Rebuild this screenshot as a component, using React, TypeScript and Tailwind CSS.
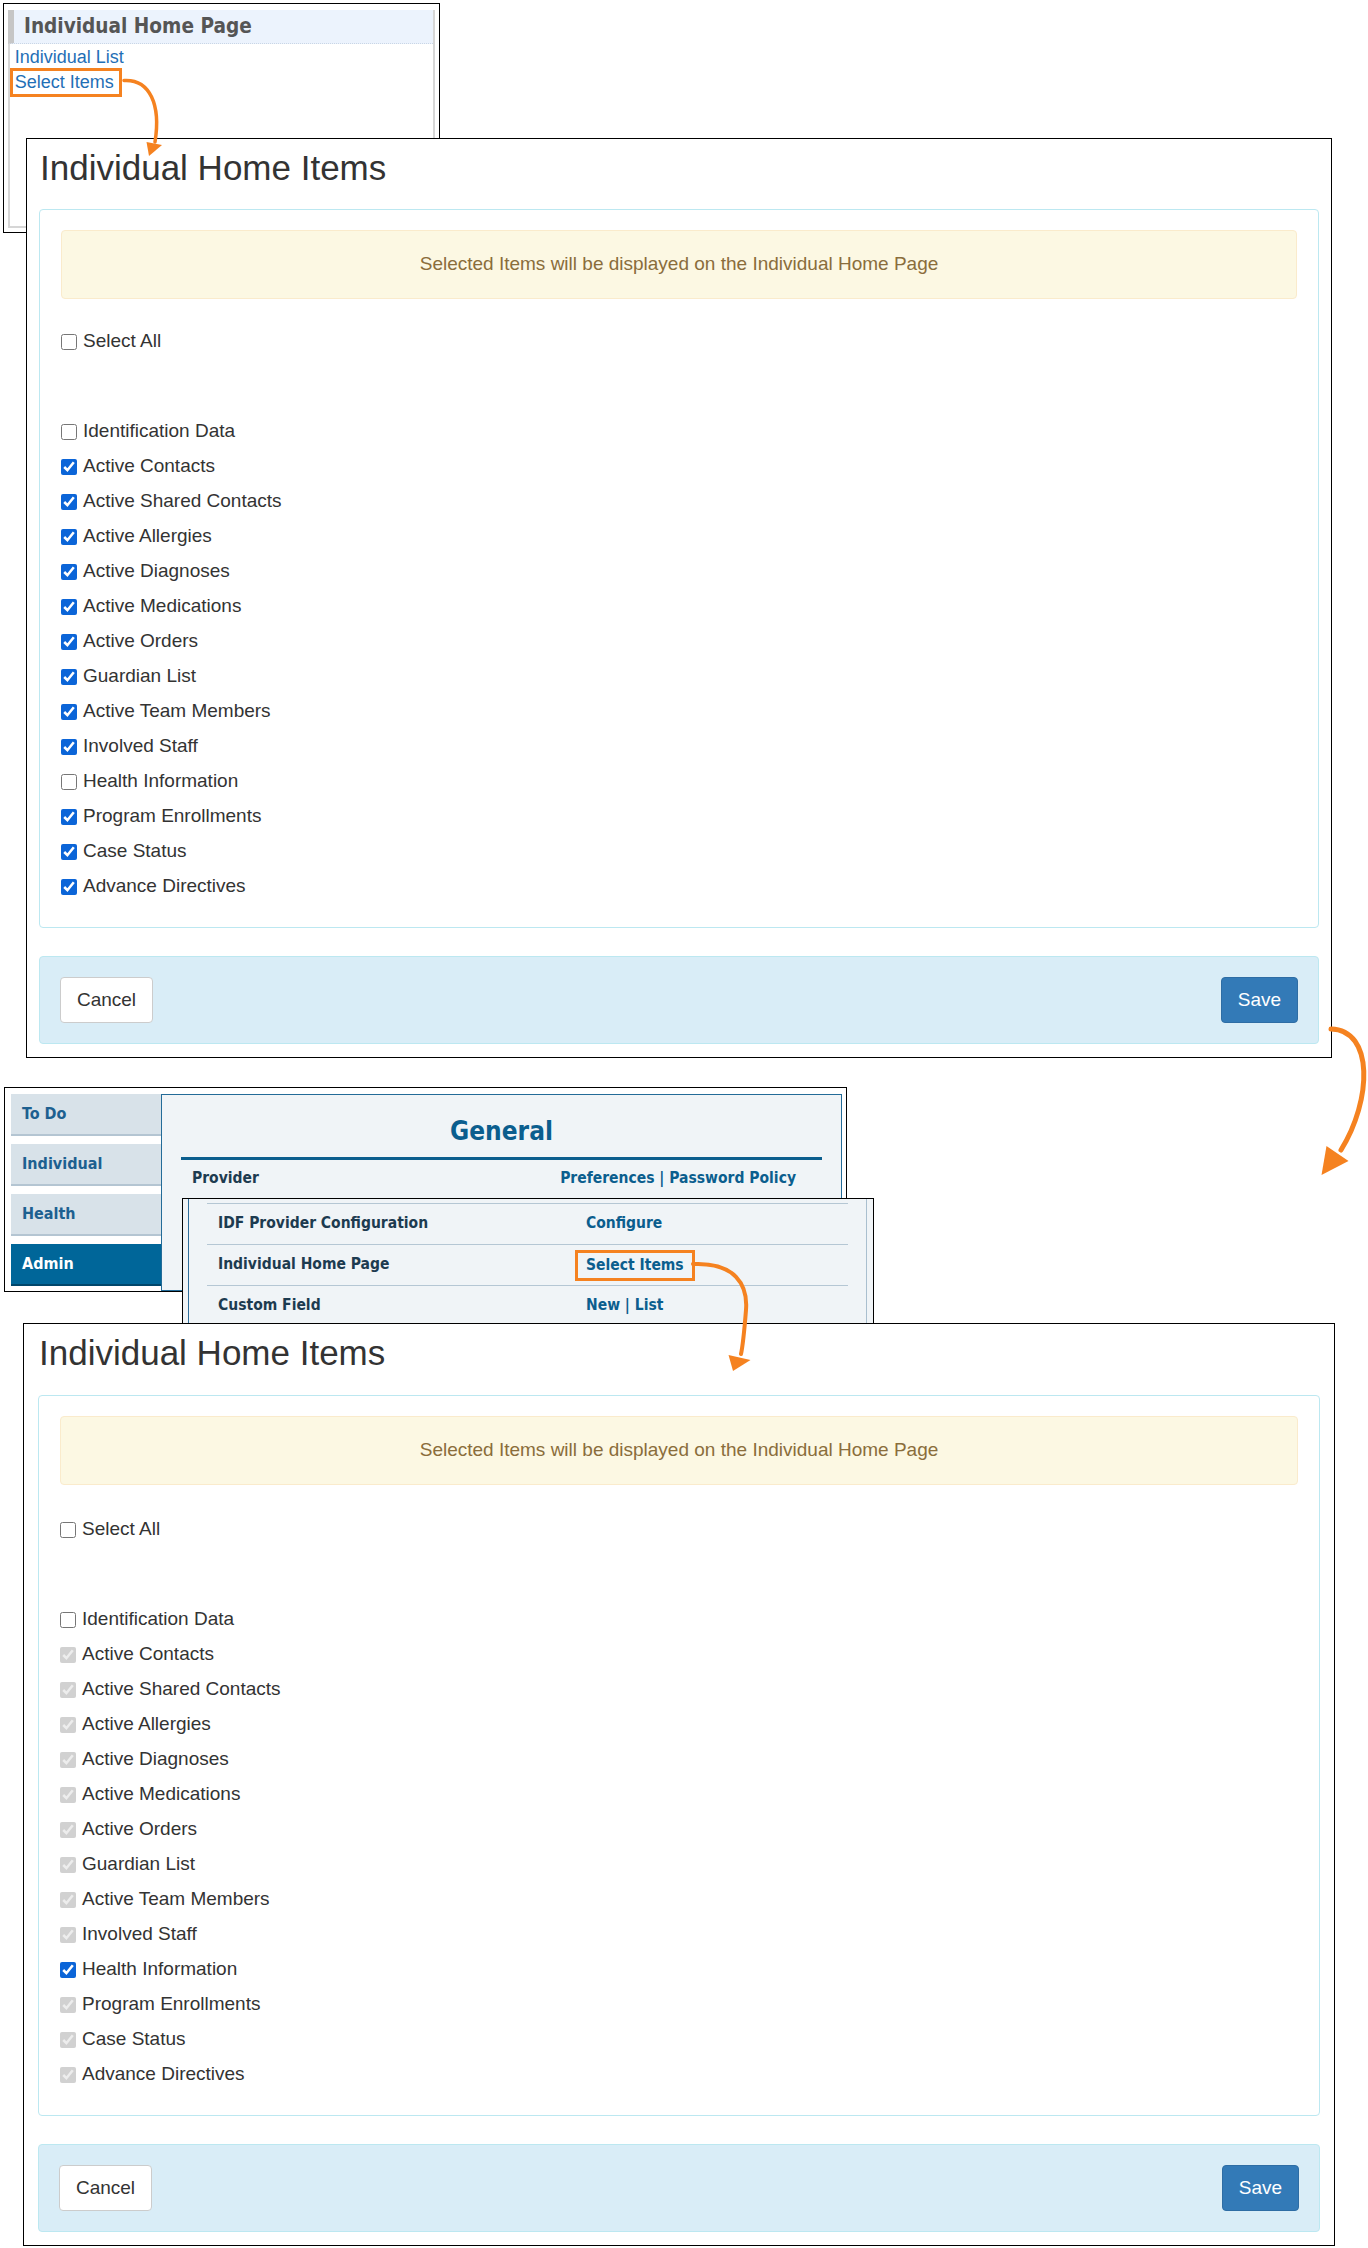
import React from 'react';

const sans = "[font-family:'Liberation_Sans',Arial,sans-serif]";
const tahoma = "[font-family:'DejaVu_Sans_Condensed','DejaVu_Sans',sans-serif] [font-stretch:condensed] font-bold";

const items = [
  'Identification Data',
  'Active Contacts',
  'Active Shared Contacts',
  'Active Allergies',
  'Active Diagnoses',
  'Active Medications',
  'Active Orders',
  'Guardian List',
  'Active Team Members',
  'Involved Staff',
  'Health Information',
  'Program Enrollments',
  'Case Status',
  'Advance Directives',
];

type ItemState = { checked: boolean; disabled: boolean };

function firstState(name: string): ItemState {
  const off = name === 'Identification Data' || name === 'Health Information';
  return { checked: !off, disabled: false };
}

function secondState(name: string): ItemState {
  if (name === 'Identification Data') return { checked: false, disabled: false };
  if (name === 'Health Information') return { checked: true, disabled: false };
  return { checked: true, disabled: true };
}

function CheckRow({ label, checked, disabled }: { label: string; checked: boolean; disabled: boolean }) {
  return (
    <label className="flex h-[35px] items-center">
      <input
        type="checkbox"
        defaultChecked={checked}
        disabled={disabled}
        className="m-0 h-[16px] w-[16px] accent-[#0b65d8]"
      />
      <span className="ml-[6px] text-[19px] text-[#333]">{label}</span>
    </label>
  );
}

function ItemsPanel({ second, className }: { second?: boolean; className: string }) {
  const stateOf = second ? secondState : firstState;
  return (
    <div className={`border border-black bg-white pt-[9px] ${sans} ${className}`}>
      <h1 className="h-[40px] pl-[1px] text-[35px] leading-[40px] text-[#333]">Individual Home Items</h1>
      <div className={`${second ? 'mt-[22px]' : 'mt-[21px]'} rounded-[4px] border border-[#bce8f1] px-[21px] pt-[20px] pb-[23px]`}>
        <div className="flex h-[69px] items-center justify-center rounded-[4px] border border-[#faebcc] bg-[#fcf8e3] text-[19px] text-[#8a6d3b]">
          Selected Items will be displayed on the Individual Home Page
        </div>
        <div className={second ? 'mt-[27px]' : 'mt-[25px]'}>
          <CheckRow label="Select All" checked={false} disabled={false} />
        </div>
        <div className="mt-[55px]">
          {items.map((name) => {
            const s = stateOf(name);
            return <CheckRow key={name} label={name} checked={s.checked} disabled={s.disabled} />;
          })}
        </div>
      </div>
      <div className="mt-[28px] mb-[13px] flex h-[88px] items-center justify-between rounded-[4px] border border-[#bce8f1] bg-[#d9edf7] px-[20px]">
        <button className="h-[46px] w-[93px] rounded-[4px] border border-[#ccc] bg-white text-[19px] text-[#333]">Cancel</button>
        <button className="h-[46px] w-[77px] rounded-[4px] border border-[#2e6da4] bg-[#337ab7] text-[19px] text-white">Save</button>
      </div>
    </div>
  );
}

function TopBox() {
  return (
    <div className="ml-[3px] h-[230px] w-[437px] border border-black bg-white px-[4px] pt-[6px] pb-[4px]">
      <div className="h-full border-2 border-t-0 border-[#d6d6d6]">
        <div className={`-ml-[2px] flex h-[34px] items-center border-b border-l-[6px] border-dotted border-b-[#c9d6e6] border-l-[#c6c6c6] [border-left-style:solid] bg-[#ecf3fd] pl-[10px] text-[20.6px] text-[#555] ${tahoma}`}>
          Individual Home Page
        </div>
        <div className={`flex flex-col items-start pt-[2px] text-[18px] leading-[23px] text-[#1f6fb6] ${sans}`}>
          <span className="pl-[4.7px]">Individual List</span>
          <span className="-mt-[1px] border-[3px] border-[#f58220] pl-[1.7px] pr-[5px]">Select Items</span>
        </div>
      </div>
    </div>
  );
}

const tabs = ['To Do', 'Individual', 'Health', 'Admin'];

function AdminBox() {
  return (
    <div className={`mt-[29px] ml-[4px] flex h-[205px] w-[843px] border border-black bg-white pt-[6px] pl-[6px] ${tahoma}`}>
      <div className="w-[150px]">
        {tabs.map((t) => (
          <div
            key={t}
            className={
              t === 'Admin'
                ? 'mb-[8px] flex h-[42px] items-center border-b-2 border-[#00466b] bg-[#006699] pl-[11px] text-[16px] text-white'
                : 'mb-[8px] flex h-[42px] items-center border-b-2 border-[#b4c5d2] bg-[#d8e2e9] pl-[11px] text-[16px] text-[#1d6090]'
            }
          >
            {t}
          </div>
        ))}
      </div>
      <div className="w-[681px] border border-[#236b98] bg-[#f0f4f7]">
        <div className="pt-[20px] text-center text-[26px] leading-[32px] text-[#0b5e8e]">General</div>
        <div className="mx-[19px] mt-[10px] h-[3px] bg-[#0b5e8e]" />
        <div className="mx-[19px] flex h-[38px] items-center justify-between pl-[11px] pr-[26px] text-[15.5px]">
          <span className="text-[#1d3b50]">Provider</span>
          <span className="text-[#0b5e8e]">Preferences | Password Policy</span>
        </div>
      </div>
    </div>
  );
}

function SubRow({ label, children }: { label: string; children: React.ReactNode }) {
  return (
    <div className="grid h-[41px] grid-cols-[368px_1fr] items-center border-t border-[#b5c7d4] pl-[11px]">
      <span className="text-[#1d3b50]">{label}</span>
      <span className="text-[#0b5e8e]">{children}</span>
    </div>
  );
}

function SubBox() {
  return (
    <div className={`relative z-[5] -mt-[94px] ml-[182px] h-[140px] w-[692px] border border-black bg-[#f0f4f7] text-[15.5px] ${tahoma}`}>
      <div className="mr-[6px] ml-[5px] h-full border-r border-l border-r-[#a9bfcf] border-l-[#2f6f9c] pt-[4px]">
        <div className="mx-[18px]">
          <SubRow label="IDF Provider Configuration">Configure</SubRow>
          <SubRow label="Individual Home Page">
            <span className="-ml-[11px] inline-block border-[3px] border-[#f58220] px-[8px] leading-[25px]">Select Items</span>
          </SubRow>
          <SubRow label="Custom Field">New | List</SubRow>
        </div>
      </div>
    </div>
  );
}

function Arrows() {
  return (
    <svg className="pointer-events-none absolute top-0 left-0 z-30" width="1368" height="2248" viewBox="0 0 1368 2248">
      <g fill="none" stroke="#f58220" strokeLinecap="round">
        <path d="M124 80.5 C 150 79, 161 105, 155 142" strokeWidth="3.5" />
        <path d="M1331 1029 C 1374 1030, 1372 1100, 1341 1150" strokeWidth="5" />
        <path d="M693 1264 C 735 1262, 748 1285, 746 1310 S 743 1345, 741 1354" strokeWidth="4" />
      </g>
      <g fill="#f58220">
        <polygon points="146.5,142 162,145 149,156" />
        <polygon points="1326.5,1146 1348.5,1161 1321.5,1175" />
        <polygon points="728.5,1355 750.5,1360 733,1371" />
      </g>
    </svg>
  );
}

export default function App() {
  return (
    <div className="relative h-[2248px] w-[1368px] overflow-hidden bg-white pt-[3px]">
      <TopBox />
      <ItemsPanel className="relative z-10 -mt-[95px] ml-[26px] w-[1306px] px-[12px]" />
      <AdminBox />
      <SubBox />
      <ItemsPanel second className="relative z-10 -mt-[15px] ml-[23px] w-[1312px] px-[14px]" />
      <Arrows />
    </div>
  );
}
